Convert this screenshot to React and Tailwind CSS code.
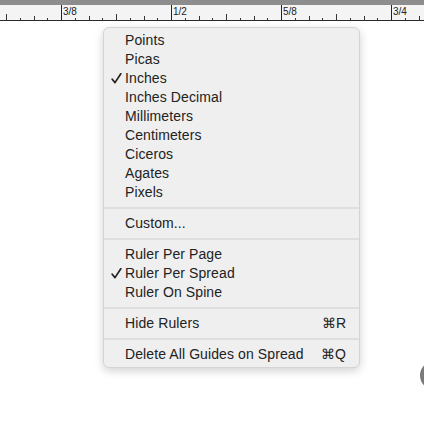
import React from 'react';

const units = ['Points', 'Picas', 'Inches', 'Inches Decimal', 'Millimeters', 'Centimeters', 'Ciceros', 'Agates', 'Pixels'];
const rulerModes = ['Ruler Per Page', 'Ruler Per Spread', 'Ruler On Spine'];

const majors = [
  { x: 61, label: '3/8' },
  { x: 171, label: '1/2' },
  { x: 281, label: '5/8' },
  { x: 391, label: '3/4' },
];

const Ruler = () => {
  const ticks = [];
  for (let k = -8; k < 32; k++) {
    const x = Math.round(61 + k * 13.75) + 0.5;
    if (x < 0 || x > 424) continue;
    const m = ((k % 8) + 8) % 8;
    if (m === 0) continue;
    const top = m === 4 ? 14 : m % 2 === 0 ? 16 : 18;
    ticks.push(<line key={k} x1={x} x2={x} y1={top} y2={20} stroke="#333" strokeWidth="1" />);
  }
  return (
    <svg width="424" height="21" className="block">
      <rect x="0" y="0" width="424" height="5" fill="#8d8d8d" />
      <rect x="0" y="5" width="424" height="15" fill="#f4f4f4" />
      <line x1="0" x2="424" y1="20.5" y2="20.5" stroke="#2a2a2a" />
      {ticks}
      {majors.map(m => (
        <g key={m.x}>
          <line x1={m.x + 0.5} x2={m.x + 0.5} y1="5" y2="20" stroke="#222" />
          <text x={m.x + 2} y="14.5" fontSize="10" fill="#222" fontFamily="Liberation Sans, Arial, sans-serif">{m.label}</text>
        </g>
      ))}
    </svg>
  );
};

const Check = () => (
  <svg width="11" height="11" viewBox="0 0 11 11" className="ml-[2px]">
    <path d="M1.2 6.2 L4 9.6 L9.8 0.8" fill="none" stroke="#222" strokeWidth="1.7" strokeLinecap="round" strokeLinejoin="round" />
  </svg>
);

const Item = ({ label, checked, shortcut }) => (
  <div className="flex h-[19px] items-center pl-[5px] pr-[13px]">
    <span className="flex w-[16px] items-center">{checked && <Check />}</span>
    <span className="flex-1 tracking-[0.1px]">{label}</span>
    {shortcut && <span>{shortcut}</span>}
  </div>
);

const Sep = () => <div className="my-[5px] h-[2px] bg-[#dedede]" />;

export default function App() {
  return (
    <div className="relative h-[427px] w-[424px] overflow-hidden bg-white font-['Liberation_Sans',Arial,sans-serif] text-[14px] text-[#222]">
      <Ruler />
      <div className="ml-[103px] mt-[6px] w-[257px] rounded-[6px] border border-[#d4d4d4] bg-[#efefef] py-[3px] shadow-[0_3px_10px_rgba(0,0,0,0.18)]">
        {units.map(u => <Item key={u} label={u} checked={u === 'Inches'} />)}
        <Sep />
        <Item label="Custom..." />
        <Sep />
        {rulerModes.map(u => <Item key={u} label={u} checked={u === 'Ruler Per Spread'} />)}
        <Sep />
        <Item label="Hide Rulers" shortcut="⌘R" />
        <Sep />
        <Item label="Delete All Guides on Spread" shortcut="⌘Q" />
      </div>
      <div className="absolute left-[420px] top-[361px] h-[29px] w-[29px] rounded-full bg-[#7a7a7a]" />
    </div>
  );
}
